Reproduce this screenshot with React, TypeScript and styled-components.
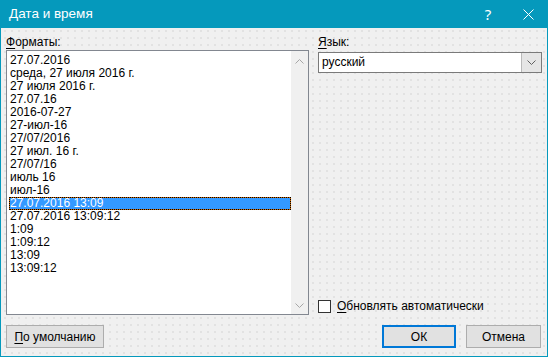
import React from "react";
import styled, { createGlobalStyle } from "styled-components";

const Global = createGlobalStyle`
  html, body { margin: 0; padding: 0; background: #ffffff; }
  body { font-family: "Liberation Sans", Arial, sans-serif; }
`;

const TEAL = "#0599bc";

const Window = styled.div`
  width: 548px;
  height: 357px;
  box-sizing: border-box;
  display: flex;
  flex-direction: column;
  background: #f0f0f0;
  border: 1px solid ${TEAL};
  border-top: none;
  font-size: 12px;
  color: #000;
`;

const TitleBar = styled.div`
  height: 28px;
  margin: 0 -1px;
  background: ${TEAL};
  display: flex;
  align-items: center;
  color: #fff;
  flex-shrink: 0;
`;

const Title = styled.div`
  flex: 1;
  padding-left: 9px;
  font-size: 13.5px;
  line-height: 28px;
  padding-bottom: 1px;
`;

const TitleButton = styled.div`
  width: 40px;
  height: 28px;
  display: flex;
  align-items: center;
  justify-content: center;
  font-family: "Noto Sans", sans-serif;
  font-size: 15px;
`;

const Body = styled.div`
  flex: 1;
  display: grid;
  grid-template-columns: 303px 224px;
  column-gap: 9px;
  padding: 6px 4px 8px 5px;
  background-color: #f0f0f0;
  background-image: radial-gradient(circle at 1px 1px, #e2e2e2 0.8px, transparent 1px);
  background-size: 7px 7px;
  background-position: 3px 2px;
`;

const Column = styled.div`
  display: flex;
  flex-direction: column;
  min-height: 0;
`;

const Label = styled.div`
  line-height: 16px;
  height: 16px;
  white-space: nowrap;
`;

const Key = styled.span`
  text-decoration: underline;
  text-underline-offset: 2px;
`;

const ListBox = styled.div`
  height: 265px;
  box-sizing: border-box;
  border: 1px solid #828790;
  background: #fff;
  display: flex;
`;

const Items = styled.div`
  flex: 1;
  padding: 3px 0 0 2px;
  display: flex;
  flex-direction: column;
`;

const Item = styled.div<{ $selected?: boolean }>`
  height: 13px;
  line-height: 13px;
  padding-left: 1px;
  white-space: nowrap;
  box-sizing: border-box;
  ${(p) =>
    p.$selected
      ? `
    background: #3399ff;
    color: #fff;
    border: 1px solid #cc6600;
    outline: 1px dotted #000;
    outline-offset: -1px;
    padding-left: 0;
    line-height: 11px;
  `
      : ""}
`;

const ScrollBar = styled.div`
  width: 17px;
  background: #f0f0f0;
  display: flex;
  flex-direction: column;
  justify-content: space-between;
  align-items: center;
  padding: 8px 0 6px;
  box-sizing: border-box;
`;

const Spacer = styled.div`
  flex: 1;
`;

const Button = styled.div<{ $width: number; $default?: boolean }>`
  width: ${(p) => p.$width}px;
  height: 23px;
  box-sizing: border-box;
  background: #e1e1e1;
  border: ${(p) => (p.$default ? "2px solid #0078d7" : "1px solid #adadad")};
  display: flex;
  align-items: center;
  justify-content: center;
  line-height: 16px;
  white-space: nowrap;
  flex-shrink: 0;
`;

const LeftButtonRow = styled.div`
  margin-top: 10px;
  display: flex;
`;

const Select = styled.div`
  margin-top: 2px;
  height: 21px;
  box-sizing: border-box;
  border: 1px solid #7a7a7a;
  background: #fff;
  display: flex;
`;

const SelectValue = styled.div`
  flex: 1;
  padding-left: 3px;
  line-height: 18px;
`;

const DropButton = styled.div`
  width: 19px;
  background: #e5e5e5;
  border-left: 1px solid #b9b9b9;
  display: flex;
  align-items: center;
  justify-content: center;
`;

const CheckRow = styled.div`
  display: flex;
  align-items: center;
  height: 16px;
  gap: 6px;
  margin-bottom: 11px;
`;

const CheckBox = styled.div`
  width: 13px;
  height: 13px;
  box-sizing: border-box;
  border: 1px solid #333;
  background: #fff;
`;

const ButtonRow = styled.div`
  display: flex;
  justify-content: flex-end;
  gap: 10px;
  padding-right: 1px;
`;

const Chevron = ({ down, color }: { down?: boolean; color: string }) => (
  <svg width="9" height="5" viewBox="0 0 9 5">
    <polyline
      points={down ? "0.5,0.5 4.5,4.5 8.5,0.5" : "0.5,4.5 4.5,0.5 8.5,4.5"}
      fill="none"
      stroke={color}
      strokeWidth="1"
    />
  </svg>
);

const formats = [
  "27.07.2016",
  "среда, 27 июля 2016 г.",
  "27 июля 2016 г.",
  "27.07.16",
  "2016-07-27",
  "27-июл-16",
  "27/07/2016",
  "27 июл. 16 г.",
  "27/07/16",
  "июль 16",
  "июл-16",
  "27.07.2016 13:09",
  "27.07.2016 13:09:12",
  "1:09",
  "1:09:12",
  "13:09",
  "13:09:12",
];

export default function App() {
  return (
    <>
      <Global />
      <Window>
        <TitleBar>
          <Title>Дата и время</Title>
          <TitleButton>?</TitleButton>
          <TitleButton>
            <svg width="11" height="11" viewBox="0 0 11 11">
              <line x1="0.5" y1="0.5" x2="10.5" y2="10.5" stroke="#fff" strokeWidth="1" />
              <line x1="10.5" y1="0.5" x2="0.5" y2="10.5" stroke="#fff" strokeWidth="1" />
            </svg>
          </TitleButton>
        </TitleBar>
        <Body>
          <Column>
            <Label>
              <Key>Ф</Key>орматы:
            </Label>
            <ListBox>
              <Items>
                {formats.map((f, i) => (
                  <Item key={i} $selected={i === 11}>
                    {f}
                  </Item>
                ))}
              </Items>
              <ScrollBar>
                <Chevron color="#a6a6a6" />
                <Chevron color="#a6a6a6" down />
              </ScrollBar>
            </ListBox>
            <LeftButtonRow>
              <Button $width={98}>
                <Key>П</Key>о умолчанию
              </Button>
            </LeftButtonRow>
          </Column>
          <Column>
            <Label>
              <Key>Я</Key>зык:
            </Label>
            <Select>
              <SelectValue>русский</SelectValue>
              <DropButton>
                <Chevron color="#606060" down />
              </DropButton>
            </Select>
            <Spacer />
            <CheckRow>
              <CheckBox />
              <span>
                <Key>О</Key>бновлять автоматически
              </span>
            </CheckRow>
            <ButtonRow>
              <Button $width={74} $default>
                ОК
              </Button>
              <Button $width={75}>Отмена</Button>
            </ButtonRow>
          </Column>
        </Body>
      </Window>
    </>
  );
}
